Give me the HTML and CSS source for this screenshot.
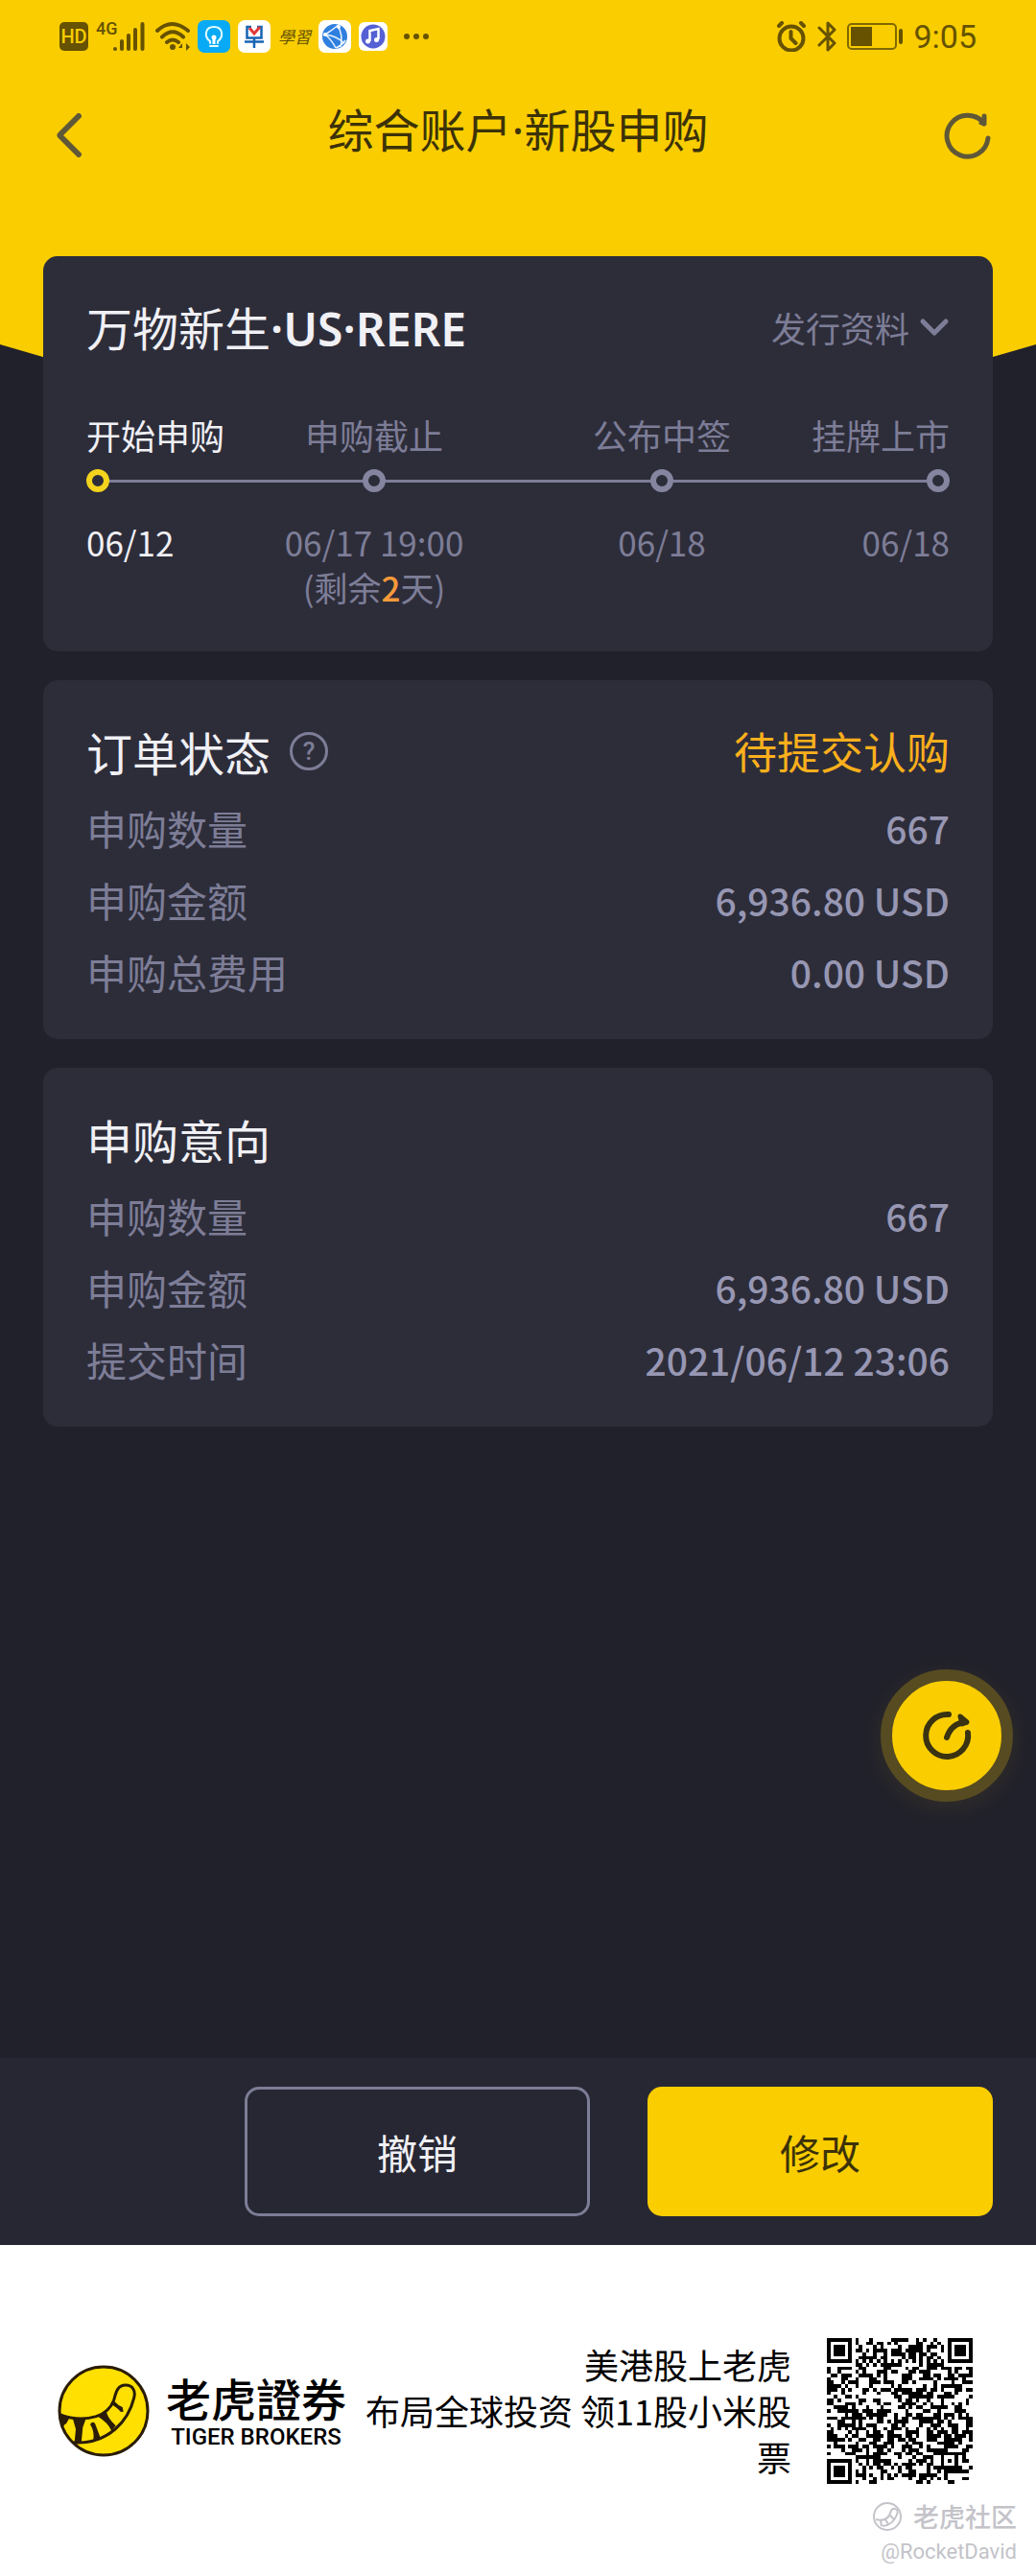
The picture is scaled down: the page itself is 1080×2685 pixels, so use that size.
FILE: index.html
```html
<!DOCTYPE html>
<html lang="zh-CN">
<head>
    <meta charset="UTF-8">
    <meta name="viewport" content="width=device-width, initial-scale=1">
    <title>综合账户·新股申购</title>
    <link rel="stylesheet" href="styles.css">
</head>
<body>
    <div class="page">
        <div class="hero-bg"></div>

        <!-- 状态栏 -->
        <div class="status-bar">
            <div class="status-left">
                <span class="hd">HD</span>
                <svg class="signal" width="52" height="42" viewBox="0 -4 52 42">
                    <text x="0" y="15" class="net-type">4G</text>
                    <g stroke="#665200" stroke-width="4" stroke-linecap="round">
                        <path d="M20 30v0M27 30v-8M34 30v-14M41 30v-20M48.500 30V4"/>
                    </g>
                </svg>
                <svg class="wifi" width="36" height="34" viewBox="0 0 36 34" fill="none" stroke="#665200" stroke-width="4" stroke-linecap="round">
                    <path d="M2 11Q17-3 34 11M7 17.500Q18 7 29 17.500M12 23Q18 18 24 23"/>
                    <circle cx="18" cy="28" r="3" fill="#665200" stroke="none"/>
                    <path d="M28 24l-4 5h4zM32 24v8l4-4z" fill="#665200" stroke="none"/>
                </svg>
                <svg class="app" width="34" height="34" viewBox="0 0 34 34">
                    <rect width="34" height="34" rx="7" fill="#08aaf5"/>
                    <g fill="none" stroke="#e4fbff" stroke-width="2" stroke-linecap="round">
                        <path d="M13 24v-2C6 17 8 7 17 7s11 10 4 15v2M13 27h8"/>
                    </g>
                    <circle cx="17" cy="18" r="2.500" fill="#fff"/>
                    <path d="M15.500 18h3v7h-3z" fill="#fff"/>
                </svg>
                <svg class="app" width="34" height="34" viewBox="0 0 34 34" fill="none" stroke-width="2.500">
                    <rect width="34" height="34" rx="7" fill="#fff"/>
                    <path d="M14 7H9.500v11.500h15V7H20M7 22.500h20M17 19v10" stroke="#1764b5"/>
                    <path d="M12 8l5 6 6-7" stroke="#e23838" stroke-width="3"/>
                </svg>
                <span class="calligraphy">學習</span>
                <svg class="app" width="34" height="34" viewBox="0 0 34 34">
                    <rect width="34" height="34" rx="7" fill="#fff"/>
                    <circle cx="17" cy="17" r="13" fill="#2f7fdf"/>
                    <path d="M22 4Q15 10 7 15Q18 16 27 24M7 15q7 6 11 14M20 6q6 9 3 22M18 29q7-3 10-8" fill="none" stroke="#e8f4ff" stroke-width="1.500"/>
                    <circle cx="7" cy="15" r="2" fill="#fff"/>
                    <circle cx="21" cy="7" r="2" fill="#fff"/>
                </svg>
                <svg class="music" width="30" height="30" viewBox="0 0 30 30">
                    <rect width="30" height="30" rx="6" fill="#fff"/>
                    <circle cx="15" cy="15" r="12.500" fill="#5560d4"/>
                    <path d="M11.500 20v-11l9-2v11" fill="none" stroke="#fff" stroke-width="2.500"/>
                    <circle cx="9.500" cy="20" r="2.500" fill="#fff"/>
                    <circle cx="18.500" cy="18.500" r="2.500" fill="#fff"/>
                </svg>
                <svg width="28" height="8" viewBox="0 0 28 8" fill="#665200">
                    <circle cx="4" cy="4" r="3"/><circle cx="14" cy="4" r="3"/><circle cx="24" cy="4" r="3"/>
                </svg>
            </div>
            <div class="status-right">
                <svg width="32" height="32" viewBox="0 0 32 32" fill="none" stroke="#665200" stroke-width="4" stroke-linecap="round">
                    <circle cx="16" cy="18" r="12.500"/>
                    <path d="M15.500 11v7l5 5M3 5l3-3M29 5l-3-3"/>
                </svg>
                <svg width="20" height="32" viewBox="0 0 20 32" fill="none" stroke="#665200" stroke-width="3" stroke-linecap="round" stroke-linejoin="round">
                    <path d="M2 7l16 16-7 7V2l7 7L2 25"/>
                </svg>
                <svg class="battery" width="58" height="28" viewBox="0 0 58 28">
                    <rect x="1" y="1" width="50" height="26" rx="4" fill="none" stroke="#806800" stroke-width="2"/>
                    <rect x="4" y="4" width="22" height="20" fill="#665200"/>
                    <rect x="54" y="6" width="4" height="16" rx="2" fill="#665200"/>
                </svg>
                <span class="time">9:05</span>
            </div>
        </div>

        <header class="nav">
            <button class="nav-btn back" aria-label="返回">
                <svg width="30" height="46" viewBox="0 0 30 46" fill="none" stroke="#5f5838" stroke-width="6" stroke-linecap="round" stroke-linejoin="round">
                    <path d="M24 3L5 22q-1 1 0 2l19 19"/>
                </svg>
            </button>
            <h1>综合账户·新股申购</h1>
            <button class="nav-btn refresh" aria-label="刷新">
                <svg width="50" height="50" viewBox="0 0 50 50" fill="none" stroke="#5f5838" stroke-width="5" stroke-linecap="round" stroke-linejoin="round">
                    <path d="M46 28A21.500 21.500 0 1 1 42 13V5M42 13l-3-1"/>
                </svg>
            </button>
        </header>

        <main>
            <section class="card">
                <div class="card-head">
                    <h2>万物新生<b>·US·RERE</b></h2>
                    <button class="more">发行资料
                        <svg width="32" height="20" viewBox="0 0 32 20" fill="none" stroke="#7d7d97" stroke-width="5" stroke-linecap="round" stroke-linejoin="round">
                            <path d="M4 4l12 12L28 4"/>
                        </svg>
                    </button>
                </div>
                <ol class="steps">
                    <li class="step active">
                        <span class="step-name">开始申购</span>
                        <span class="dot"></span>
                        <span class="step-date">06/12</span>
                    </li>
                    <li class="step">
                        <span class="step-name">申购截止</span>
                        <span class="dot"></span>
                        <span class="step-date">06/17 19:00</span>
                        <span class="step-date">(剩余<em>2</em>天)</span>
                    </li>
                    <li class="step">
                        <span class="step-name">公布中签</span>
                        <span class="dot"></span>
                        <span class="step-date">06/18</span>
                    </li>
                    <li class="step">
                        <span class="step-name">挂牌上市</span>
                        <span class="dot"></span>
                        <span class="step-date">06/18</span>
                    </li>
                </ol>
            </section>

            <section class="card">
                <div class="card-head">
                    <h2>订单状态</h2>
                    <button class="help" aria-label="说明">?</button>
                    <span class="state">待提交认购</span>
                </div>
                <dl>
                    <div class="row"><dt>申购数量</dt><dd>667</dd></div>
                    <div class="row"><dt>申购金额</dt><dd>6,936.80 USD</dd></div>
                    <div class="row"><dt>申购总费用</dt><dd>0.00 USD</dd></div>
                </dl>
            </section>

            <section class="card">
                <div class="card-head">
                    <h2>申购意向</h2>
                </div>
                <dl>
                    <div class="row"><dt>申购数量</dt><dd>667</dd></div>
                    <div class="row"><dt>申购金额</dt><dd>6,936.80 USD</dd></div>
                    <div class="row"><dt>提交时间</dt><dd>2021/06/12 23:06</dd></div>
                </dl>
            </section>

            <button class="fab" aria-label="分享">
                <svg width="56" height="56" viewBox="0 0 56 56" fill="none" stroke="#3a3312" stroke-width="6" stroke-linecap="round" stroke-linejoin="round">
                    <path d="M30 6A22 22 0 1 0 50 25"/>
                    <path d="M28 30Q33 15 48 14"/>
                    <path d="M42 8l7 6-5 2z" fill="#3a3312" stroke-width="5"/>
                </svg>
            </button>
        </main>

        <div class="actions">
            <button class="btn btn-cancel">撤销</button>
            <button class="btn btn-edit">修改</button>
        </div>

        <footer>
            <svg class="logo" width="96" height="96" viewBox="59 190 288 288">
                <circle cx="203" cy="334" r="138" fill="#ffe000"/>
                <path d="M66 345Q125 368 180 351Q222 336 235 300C241 278 245 253 272 253C294 253 304 271 298 293C282 360 220 441 108 432" fill="none" stroke="#2a1c08" stroke-width="9"/>
                <g fill="#2a1c08">
                    <path d="M64 340L95 358L86 374Q76 376 76 396Z"/>
                    <path d="M106 356L147 360L138 385L133 436L112 434L116 390Z"/>
                    <path d="M161 376Q168 364 176 373L194 420L170 427Q176 400 161 376Z"/>
                    <path d="M186 352L212 334Q212 352 241 380L228 396Q216 370 186 352Z"/>
                    <path d="M224 312L238 305Q248 317 262 322L265 336L257 337Q243 320 224 312Z"/>
                </g>
                <circle cx="203" cy="334" r="138" fill="none" stroke="#2a1c08" stroke-width="9"/>
            </svg>
            <div class="brand">
                <span class="brand-cn">老虎證券</span>
                <span class="brand-en">TIGER BROKERS</span>
            </div>
            <p class="slogan">美港股上老虎<br>布局全球投资 领11股小米股票</p>
            <svg class="qr" id="qr" viewBox="0 0 41 41" shape-rendering="crispEdges"></svg>
            <div class="watermark">
                <span class="wm-name">
                    <svg width="30" height="30" viewBox="0 0 30 30" fill="none" stroke="#c3c3c9" stroke-width="2">
                        <circle cx="15" cy="15" r="14"/>
                        <path d="M3 18q11 3 15-6 1-6 5-5 4 1 2 6-4 11-15 12M8 19l1 6M13 18l3 5M18 14l4 4"/>
                    </svg>
                    老虎社区
                </span>
                <span class="wm-user">@RocketDavid</span>
            </div>
        </footer>
    </div>

    <script>
        // 二维码
        const size = 41;
        let seed = 20210612;

        function nextBit() {
            seed = (seed * 1103515245 + 12345) % 2147483648;
            return (seed / 2147483648) < 0.5;
        }

        // 同心方块：定位点 r = 3，校正点 r = 2
        function ring(x, y, cx, cy, r) {
            const d = Math.max(Math.abs(x - cx), Math.abs(y - cy));
            if (d > r + (r === 3 ? 1 : 0)) return null;
            if (r === 3) return d === 3 || d <= 1;
            return d !== 1;
        }

        let path = '';
        for (let y = 0; y < size; y++) {
            for (let x = 0; x < size; x++) {
                let on = nextBit();
                if (y === 6 || x === 6) on = (x + y) % 2 === 0;
                [[3, 3, 3], [37, 3, 3], [3, 37, 3], [34, 34, 2]].forEach(([cx, cy, r]) => {
                    const v = ring(x, y, cx, cy, r);
                    if (v !== null) on = v;
                });
                if (on) path += `M${x} ${y}h1v1h-1z`;
            }
        }
        document.getElementById('qr').innerHTML = `<path d="${path}"/>`;
    </script>
</body>
</html>
```

FILE: styles.css
```css
* {
    box-sizing: border-box;
}

body {
    margin: 0;
    background-color: #21212b;
    font-family: 'Noto Sans CJK SC', sans-serif;
    color: #f0f0f5;
}

h1, h2, p, ol, dl, dd {
    margin: 0;
    padding: 0;
    font-weight: normal;
}

button {
    font-family: inherit;
    padding: 0;
    border: none;
    background: none;
    cursor: pointer;
}

svg {
    display: block;
    flex-shrink: 0;
}

.page {
    position: relative;
    z-index: 0;
    display: flex;
    flex-direction: column;
    min-height: 100vh;
}

.hero-bg {
    position: absolute;
    z-index: -1;
    top: 0;
    left: 0;
    right: 0;
    height: 516px;
    background-color: #f9cd00;
    clip-path: polygon(0 0, 100% 0, 100% 359px, 50% 100%, 0 359px);
}

/* 状态栏 */
.status-bar {
    display: flex;
    justify-content: space-between;
    height: 76px;
    padding: 0 62px;
    color: #665200;
}

.status-left,
.status-right {
    display: flex;
    align-items: center;
    gap: 8px;
}

.status-right {
    gap: 11px;
}

.hd {
    width: 30px;
    border-radius: 5px;
    background-color: #665200;
    color: #f9cd00;
    font: 500 20px/30px Roboto, sans-serif;
    text-align: center;
}

.net-type {
    font: 500 18px Roboto, sans-serif;
    fill: #665200;
}

.wifi {
    margin-left: 2px;
}

.calligraphy {
    font: italic 17px/34px 'Noto Sans CJK TC', sans-serif;
}

.music {
    margin-right: 8px;
}

.time {
    font: 34px/40px Roboto, sans-serif;
}

/* 导航 */
.nav {
    display: flex;
    align-items: center;
    justify-content: space-between;
    height: 130px;
    margin-bottom: 61px;
    padding: 0 46px;
}

.nav h1 {
    padding-bottom: 10px;
    font-family: 'Noto Sans', 'Noto Sans CJK SC', sans-serif;
    font-size: 48px;
    line-height: 64px;
    color: #3c3208;
}

.nav-btn {
    display: flex;
    width: 62px;
}

.back {
    padding-left: 12px;
}

.refresh {
    justify-content: flex-end;
}

main {
    position: relative;
    flex: 1;
    display: flex;
    flex-direction: column;
    gap: 30px;
    padding: 0 45px;
}

/* 卡片 */
.card {
    padding: 32px 45px 33px;
    border-radius: 15px;
    background-color: #2d2d3a;
}

.card-head {
    display: flex;
    align-items: center;
    height: 84px;
}

.card-head h2 {
    font-size: 48px;
    line-height: 64px;
}

.card-head b {
    font-family: 'Noto Sans', sans-serif;
    font-weight: 600;
}

.more {
    display: flex;
    align-items: center;
    gap: 10px;
    margin-left: auto;
    font-size: 36px;
    line-height: 48px;
    color: #7d7d97;
}

.help {
    width: 40px;
    height: 40px;
    margin-left: 20px;
    border: 3px solid #7d7d97;
    border-radius: 50%;
    font: 500 26px/34px Roboto, sans-serif;
    color: #7d7d97;
}

.state {
    margin-left: auto;
    font-size: 45px;
    line-height: 64px;
    color: #fcb01c;
}

/* 申购进度 */
.steps {
    position: relative;
    display: grid;
    grid-template-columns: 1fr 2fr 2fr 1fr;
    padding: 46px 0 11px;
    list-style: none;
}

.steps::before {
    content: '';
    position: absolute;
    top: 117px;
    left: 12px;
    right: 12px;
    height: 3px;
    background-color: #7d7d97;
}

.step {
    display: flex;
    flex-direction: column;
    align-items: center;
    color: #7d7d97;
    white-space: nowrap;
}

.step:first-child {
    align-items: flex-start;
}

.step:last-child {
    align-items: flex-end;
}

.step-name {
    font-size: 36px;
    line-height: 48px;
}

.dot {
    position: relative;
    width: 24px;
    height: 24px;
    margin: 12px 0 28px;
    border: 6px solid #8585a0;
    border-radius: 50%;
    background-color: #2d2d3a;
}

.step-date {
    font-size: 35px;
    line-height: 47px;
}

.step-date em {
    font-style: normal;
    font-weight: 500;
    color: #f79a3a;
}

.step.active {
    color: #f0f0f5;
}

.active .dot {
    border-color: #f3d31c;
}

.row {
    display: flex;
    align-items: center;
    justify-content: space-between;
    height: 75px;
    line-height: 60px;
}

.row dt {
    font-size: 42px;
    color: #7d7d97;
}

.row dd {
    font-size: 39px;
    font-weight: 500;
    color: #9797b3;
}

.fab {
    position: absolute;
    right: 24px;
    bottom: 267px;
    display: flex;
    align-items: center;
    justify-content: center;
    width: 138px;
    height: 138px;
    border: 12px solid #574b22;
    border-radius: 50%;
    background-color: #f9cd00;
    box-shadow: 0 6px 24px rgba(249, 205, 0, 0.08);
}

/* 底部按钮 */
.actions {
    display: flex;
    justify-content: flex-end;
    gap: 60px;
    padding: 30px 45px;
    background-color: #272733;
}

.btn {
    width: 360px;
    height: 135px;
    border-radius: 15px;
    font-size: 42px;
    line-height: 60px;
}

.btn-cancel {
    border: 3px solid #7d7d97;
    color: #f0f0f5;
}

.btn-edit {
    background-color: #f9cd00;
    color: #3c3208;
}

/* 推广 */
footer {
    position: relative;
    display: flex;
    align-items: center;
    height: 345px;
    padding: 0 66px 0 60px;
    background-color: #fff;
    color: #000;
}

.brand {
    display: flex;
    flex-direction: column;
    align-items: center;
    margin-left: 17px;
}

.brand-cn {
    font: 500 47px/54px 'Noto Sans CJK TC', sans-serif;
}

.brand-en {
    font: 500 24px/28px Roboto, sans-serif;
}

.slogan {
    flex: 1;
    padding-bottom: 2px;
    font-size: 36px;
    line-height: 48px;
    text-align: right;
}

.qr {
    width: 152px;
    height: 152px;
    margin-left: 37px;
}

.watermark {
    position: absolute;
    right: 20px;
    bottom: 8px;
    display: flex;
    flex-direction: column;
    align-items: flex-end;
    color: #c3c3c9;
}

.wm-name {
    display: flex;
    align-items: center;
    gap: 12px;
    font-size: 27px;
    font-weight: 500;
    line-height: 40px;
}

.wm-user {
    font: 22px/34px Roboto, sans-serif;
}
```
